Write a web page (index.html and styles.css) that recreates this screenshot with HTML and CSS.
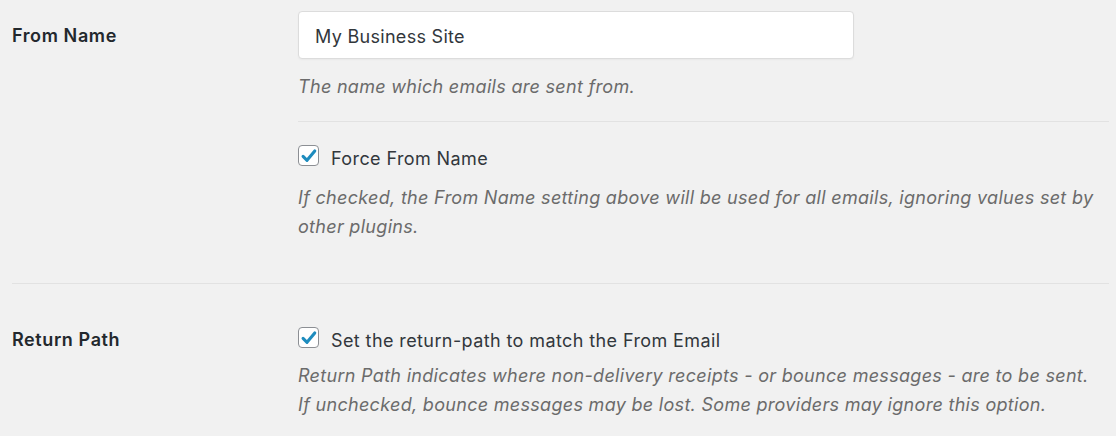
FILE: index.html
```html
<!DOCTYPE html>
<html lang="en">
<head>
  <meta charset="UTF-8">
  <title>Mail settings</title>
  <link rel="stylesheet" href="styles.css">
</head>
<body>
  <div class="form-table">
    <div class="row row-first">
      <div class="label">From Name</div>
      <div class="field">
        <input class="text-input" type="text" value="My Business Site">
        <p class="description">The name which emails are sent from.</p>
        <div class="sub-option">
          <label class="check">
            <span class="box">
              <svg viewBox="0 0 20 20" width="18" height="18"><path d="M3.4 10.4 L7.8 14.8 L16.4 4.4" fill="none" stroke="#1e8cbe" stroke-width="3.4" stroke-linecap="round" stroke-linejoin="round"/></svg>
            </span>
            <span class="check-text">Force From Name</span>
          </label>
          <p class="description">If checked, the From Name setting above will be used for all emails, ignoring values set by other plugins.</p>
        </div>
      </div>
    </div>

    <div class="row row-second">
      <div class="label">Return Path</div>
      <div class="field">
        <label class="check">
          <span class="box">
            <svg viewBox="0 0 20 20" width="18" height="18"><path d="M3.4 10.4 L7.8 14.8 L16.4 4.4" fill="none" stroke="#1e8cbe" stroke-width="3.4" stroke-linecap="round" stroke-linejoin="round"/></svg>
          </span>
          <span class="check-text">Set the return-path to match the From Email</span>
        </label>
        <p class="description">Return Path indicates where non-delivery receipts - or bounce messages - are to be sent.<br>If unchecked, bounce messages may be lost. Some providers may ignore this option.</p>
      </div>
    </div>
  </div>
</body>
</html>
```

FILE: styles.css
```css
body {
  margin: 0;
  background: #f1f1f1;
  font-family: Inter, "Liberation Sans", Arial, sans-serif;
  color: #32373c;
  font-size: 18px;
  letter-spacing: 0.4px;
}
.form-table {
  padding: 0 7px 0 12px;
}
.row {
  display: flex;
}
.row-first {
  padding: 11px 0 42px;
  border-bottom: 1px solid #e2e2e2;
}
.row-second {
  padding: 43px 0 0;
}
.label {
  width: 286px;
  flex-shrink: 0;
  font-weight: 600;
  color: #23282d;
  line-height: 24px;
  letter-spacing: 0.6px;
}
.row-first .label {
  padding-top: 13px;
}
.row-second .label {
  padding-top: 1px;
}
.field {
  flex: 1;
}
.text-input {
  display: block;
  box-sizing: border-box;
  width: 556px;
  height: 48px;
  margin: 0;
  padding: 2px 16px 0;
  border: 1px solid #dcdcdc;
  border-radius: 4px;
  background: #fff;
  font-family: inherit;
  font-size: 18px;
  letter-spacing: 0.3px;
  color: #32373c;
  box-shadow: 0 1px 2px rgba(0,0,0,0.04);
}
.description {
  margin: 0;
  font-style: italic;
  color: #6b6b6b;
  line-height: 29px;
  letter-spacing: 0.3px;
}
.text-input + .description {
  margin-top: 13px;
}
.sub-option {
  margin-top: 20px;
  padding-top: 23px;
  border-top: 1px solid #e2e2e2;
}
.check {
  display: flex;
  align-items: flex-start;
  gap: 12px;
  line-height: 24px;
  margin-bottom: 8px;
}
.sub-option .check {
  margin-bottom: 12px;
}
.check-text {
  padding-top: 2px;
}
.box {
  box-sizing: border-box;
  width: 21px;
  height: 21px;
  border: 1px solid #8c8f94;
  border-radius: 4px;
  background: #fff;
  display: flex;
  align-items: center;
  justify-content: center;
}
```
